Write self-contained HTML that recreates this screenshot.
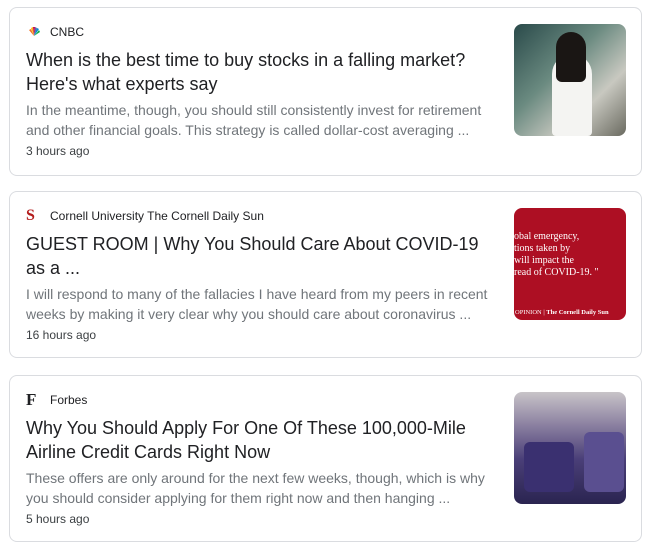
<!DOCTYPE html>
<html><head><style>
body{margin:0;background:#fff;font-family:"Liberation Sans",Arial,sans-serif;width:655px;height:553px;overflow:hidden;position:relative}
.card{position:absolute;left:9px;width:633px;height:167px;border:1px solid #dadce0;border-radius:8px;box-sizing:border-box}
.src{position:absolute;left:16px;top:16px;font-size:12px;color:#202124;display:flex;align-items:center}
.src .ic{width:16px;height:16px;margin-right:8px;display:inline-block}
.t{position:absolute;left:16px;top:40px;width:470px;font-size:18px;line-height:24px;color:#202124}
.s{position:absolute;left:16px;top:92px;width:470px;font-size:14px;line-height:20px;color:#70757a}
.tm{position:absolute;left:16px;top:136px;font-size:12px;color:#3c4043}
.img{position:absolute;left:504px;top:16px;width:112px;height:112px;border-radius:8px;overflow:hidden}
</style></head><body>
<div class="card" style="top:7px;height:169px">
<div class="src"><svg class="ic" viewBox="0 0 16 16"><path d="M8 12L3 6l2-1z" fill="#f37021"/><path d="M8 12L5 4l2-1z" fill="#fcb711"/><path d="M8 12L7 3h2z" fill="#cc004c"/><path d="M8 12L9 3l2 1z" fill="#6460aa"/><path d="M8 12l3-8 2 1z" fill="#0089d0"/><path d="M8 12l5-6 1 2z" fill="#0db14b"/></svg>CNBC</div>
<div class="t">When is the best time to buy stocks in a falling market? Here's what experts say</div>
<div class="s">In the meantime, though, you should still consistently invest for retirement and other financial goals. This strategy is called dollar-cost averaging ...</div>
<div class="tm">3 hours ago</div>
<div class="img" style="background:linear-gradient(135deg,#2a4a4a,#6a8a80 40%,#c8c8c0 70%,#6a6a60)"><div style="position:absolute;left:38px;top:30px;width:40px;height:82px;background:#f4f4f2;border-radius:20px 20px 4px 4px"></div><div style="position:absolute;left:42px;top:8px;width:30px;height:50px;background:#1a1614;border-radius:15px 15px 6px 6px"></div></div>
</div>
<div class="card" style="top:191px">
<div class="src"><span class="ic" style="color:#b31b1b;font-weight:bold;font-family:'Liberation Serif',serif;font-size:16px;line-height:16px">S</span>Cornell University The Cornell Daily Sun</div>
<div class="t">GUEST ROOM | Why You Should Care About COVID-19 as a ...</div>
<div class="s">I will respond to many of the fallacies I have heard from my peers in recent weeks by making it very clear why you should care about coronavirus ...</div>
<div class="tm">16 hours ago</div>
<div class="img" style="background:#ad0f23;color:#fff;font-family:'Liberation Serif',serif;font-size:10px;line-height:12px"><div style="position:absolute;left:0;top:23px;white-space:nowrap">obal emergency,<br>tions taken by<br>will impact the<br>read of COVID-19. "</div><div style="position:absolute;left:1px;top:99px;font-size:6.5px;white-space:nowrap">OPINION | <b>The Cornell Daily Sun</b></div></div>
</div>
<div class="card" style="top:375px">
<div class="src"><span class="ic" style="font-weight:bold;font-family:'Liberation Serif',serif;font-size:17px;line-height:16px">F</span>Forbes</div>
<div class="t">Why You Should Apply For One Of These 100,000-Mile Airline Credit Cards Right Now</div>
<div class="s">These offers are only around for the next few weeks, though, which is why you should consider applying for them right now and then hanging ...</div>
<div class="tm">5 hours ago</div>
<div class="img" style="background:linear-gradient(180deg,#c8c4c8 0%,#8a7fa0 30%,#4a3f78 60%,#2a2450 100%)"><div style="position:absolute;left:10px;top:50px;width:50px;height:50px;background:#3a3070;border-radius:6px"></div><div style="position:absolute;left:70px;top:40px;width:40px;height:60px;background:#5a4f90;border-radius:6px"></div></div>
</div>
</body></html>
